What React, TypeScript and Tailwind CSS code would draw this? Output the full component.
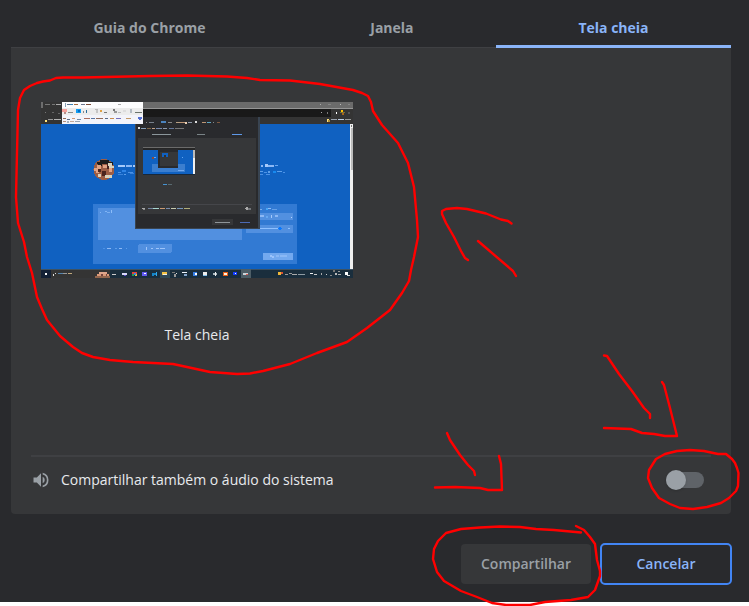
import { useState } from 'react';

type Block = [x: number, y: number, w: number, h: number, fill: string];

const blocks: Block[] = [
  [0, 0, 312, 176, '#1061c1'],
  // browser frame
  [0, 0, 312, 22, '#343434'],
  [0, 0, 2, 6, '#6d6d6d'],
  [102, 0, 210, 6, '#6b6b6b'],
  [102, 6, 210, 1, '#969696'],
  [102, 7, 188, 8, '#191919'],
  [4, 2, 5, 1, '#777'], [11, 2, 3, 1, '#777'], [15, 2, 5, 1, '#aaa'],
  [4, 10, 1, 1, '#777'], [11, 10, 2, 1, '#666'], [17, 11, 2, 1, '#666'],
  [4, 18, 2, 2, '#ffe27a'], [7, 17, 5, 1, '#999'], [13, 17, 7, 1, '#b5b5b5'],
  [279, 2, 1, 1, '#aaa'], [287, 2, 3, 1, '#858585'], [299, 2, 1, 1, '#bbb'], [307, 2, 2, 1, '#858585'],
  [280, 10, 1, 1, '#aaa'], [286, 10, 1, 2, '#777'], [295, 10, 1, 2, '#fff'],
  [300, 8, 2, 2, '#ffc400'], [299, 10, 5, 1, '#78713c'], [301, 11, 2, 2, '#a8651a'], [307, 10, 2, 2, '#555'],
  [286, 17, 2, 3, '#ffe27a'], [287, 18, 2, 2, '#b08e38'], [290, 17, 6, 1, '#9aa3af'], [297, 17, 6, 1, '#b9cce4'], [304, 17, 6, 1, '#999'],
  // scroll bar
  [309, 22, 3, 145, '#f0f0f0'], [310, 26, 2, 42, '#bcbcbc'], [310, 23, 1, 2, '#777'],
  // profile names
  [77, 63, 7, 2, '#a5c9fa'], [85, 63, 6, 2, '#8cb8f5'], [92, 63, 2, 2, '#a5c9fa'],
  [77, 70, 3, 1, '#4a91e6'], [81, 68, 4, 2, '#2d83e6'], [87, 70, 5, 1, '#4a91e6'], [77, 72, 5, 1, '#3983dc'], [83, 72, 2, 1, '#5b9eea'], [89, 71, 4, 1, '#3983dc'],
  [220, 63, 2, 2, '#8cb8f5'], [224, 62, 3, 3, '#a5c9fa'], [227, 63, 6, 2, '#8cb8f5'], [234, 63, 3, 1, '#6ca7f0'],
  [219, 69, 3, 1, '#5b9eea'], [223, 70, 3, 1, '#4a91e6'], [227, 69, 2, 2, '#5b9eea'], [232, 69, 3, 2, '#1789ef'], [236, 69, 5, 1, '#5b9eea'], [242, 70, 2, 1, '#4a91e6'],
  [219, 72, 3, 1, '#4a91e6'], [225, 72, 4, 1, '#4a91e6'],
  // form card
  [52, 102, 204, 60, '#327ad3'],
  [57, 106, 144, 32, '#5290e0'],
  [59, 110, 1, 1, '#80b3f4'], [64, 109, 2, 1, '#80b3f4'], [66, 110, 3, 1, '#7aaff0'], [70, 108, 1, 3, '#8cbcf8'],
  [62, 146, 2, 1, '#4a91e6'], [66, 146, 4, 1, '#8cb8f5'], [74, 146, 2, 1, '#5b9eea'], [78, 146, 3, 1, '#8cb8f5'], [85, 146, 1, 1, '#5b9eea'],
  [219, 107, 2, 1, '#7aaff0'], [225, 106, 2, 2, '#45a4f5'], [227, 106, 3, 1, '#8cbcf8'], [231, 107, 5, 1, '#659fe6'],
  [208, 111, 44, 7, '#5290e0'], [205, 123, 47, 8, '#5290e0'],
  [219, 113, 4, 2, '#8cb8f5'], [225, 114, 2, 2, '#65a7f0'], [230, 113, 1, 3, '#a5c9fa'], [234, 113, 3, 2, '#8cb8f5'], [250, 115, 1, 1, '#b5d5ff'],
  [209, 126, 31, 1, '#8ec0ff'], [237, 126, 4, 1, '#0878ff'], [238, 125, 2, 3, '#0878ff'], [247, 126, 2, 1, '#8ec0ff'],
  [222, 151, 30, 7, '#73a9ef'], [229, 153, 2, 2, '#9bc4fc'], [231, 154, 2, 2, '#9bc4fc'], [235, 153, 3, 2, '#8ab8f5'], [239, 153, 7, 2, '#8ab8f5'],
  // share dialog
  [94, 15, 125, 112, '#394451'],
  [95, 15, 122, 111, '#292a2d'],
  [97, 36, 118, 76, '#363739'],
  [105, 20, 1, 1, '#888'], [108, 20, 5, 1, '#78818c'], [120, 19, 5, 2, '#4b83bd'], [127, 20, 4, 1, '#888'],
  [135, 20, 4, 1, '#b8a083'], [139, 20, 5, 1, '#bd9675'], [144, 20, 2, 2, '#ead0b5'], [147, 20, 4, 1, '#9099aa'], [154, 19, 2, 2, '#ddd'], [161, 20, 4, 1, '#bd9675'], [166, 20, 4, 1, '#5ea7c4'], [172, 20, 1, 1, '#888'], [176, 20, 3, 1, '#7e5940'],
  [97, 25, 2, 2, '#ddd'], [100, 26, 5, 1, '#849db7'], [106, 26, 4, 1, '#806747'], [111, 26, 3, 1, '#c0a289'], [115, 26, 6, 1, '#7789ad'], [122, 26, 4, 1, '#909aa8'], [128, 26, 5, 1, '#64779b'], [134, 26, 9, 1, '#777'],
  [111, 32, 19, 1, '#8b969b'], [156, 32, 8, 1, '#798386'], [191, 32, 10, 1, '#5f99e8'],
  [102, 45, 52, 28, '#1061c1'], [102, 45, 52, 1, '#6b6b6b'], [102, 46, 52, 2, '#262626'],
  [111, 62, 33, 8, '#3b7ecf'], [117, 47, 20, 19, '#292a2d'], [119, 50, 18, 14, '#363739'], [121, 51, 6, 4, '#1061c1'], [123, 53, 2, 2, '#303030'],
  [111, 55, 2, 2, '#8d4a35'], [113, 55, 2, 1, '#65a7f0'], [141, 55, 1, 1, '#65a7f0'], [137, 68, 6, 1, '#73a9ef'],
  [152, 48, 2, 24, '#f0f0f0'], [152, 48, 2, 8, '#bcbcbc'], [102, 72, 52, 1, '#17283b'],
  [122, 82, 4, 1, '#4592d1'], [127, 82, 4, 1, '#596a70'], [101, 102, 110, 1, '#45464a'],
  [101, 106, 3, 1, '#aaa'], [102, 107, 2, 1, '#888'], [107, 106, 5, 1, '#73809d'], [112, 106, 6, 1, '#a9d7d0'], [119, 106, 5, 1, '#c99b74'], [125, 106, 4, 1, '#788daf'], [130, 106, 5, 1, '#c8cbb0'], [136, 106, 6, 1, '#7798bd'], [143, 106, 6, 1, '#b0ad79'],
  [204, 106, 4, 1, '#aaa'], [205, 105, 2, 3, '#aaa'], [207, 106, 3, 2, '#727579'],
  [171, 117, 21, 6, '#363739'], [174, 120, 15, 1, '#8f9599'], [199, 120, 10, 1, '#4c6ab5'],
  // task bar
  [0, 167, 312, 9, '#1a2e3d'], [0, 167, 312, 1, '#3d5262'], [0, 168, 10, 8, '#142136'], [10, 168, 59, 8, '#343434'],
  [4, 171, 2, 2, '#fff'], [12, 172, 1, 2, '#ddd'], [14, 171, 1, 1, '#ddd'], [17, 171, 5, 1, '#5685ad'], [22, 171, 4, 1, '#999'], [27, 171, 4, 1, '#c0a87d'],
  [71, 172, 4, 1, '#ccc'], [81, 171, 5, 2, '#d9d8fa'], [83, 173, 2, 1, '#5549c9'],
  [91, 170, 5, 2, '#e34535'], [91, 172, 2, 2, '#249b50'], [94, 172, 2, 2, '#eac538'], [93, 171, 2, 2, '#3883ec'],
  [101, 170, 5, 4, '#615af1'], [103, 171, 2, 1, '#fff'],
  [111, 171, 2, 3, '#1786c8'], [113, 171, 3, 2, '#1786c8'], [115, 170, 1, 4, '#31a9ed'],
  [119, 168, 10, 8, '#324956'], [121, 170, 5, 3, '#f6c344'], [122, 172, 4, 1, '#eee'],
  [131, 170, 3, 1, '#777'], [133, 172, 2, 3, '#999'], [135, 171, 1, 1, '#ddd'],
  [141, 170, 5, 1, '#edf3fa'], [143, 172, 3, 2, '#83a4cc'],
  [152, 170, 4, 4, '#367ee4'], [154, 171, 2, 2, '#fff'], [162, 170, 4, 3, '#eee'], [162, 173, 4, 1, '#7fc0ee'],
  [172, 171, 4, 2, '#aab8bf'], [174, 170, 1, 4, '#eee'], [182, 170, 5, 4, '#e65f18'], [183, 171, 3, 2, '#fff1df'],
  [192, 170, 4, 3, '#133eff'], [194, 171, 1, 1, '#fff'],
  [200, 167, 10, 9, '#4d5e67'], [202, 171, 5, 2, '#ccd4d9'], [205, 172, 2, 1, '#dd5b55'],
  [237, 170, 3, 3, '#efb83a'], [240, 170, 2, 2, '#db5331'], [244, 172, 3, 1, '#999'], [248, 171, 3, 1, '#999'], [251, 172, 5, 1, '#aaa'], [257, 172, 7, 1, '#8f9ba3'],
  [269, 171, 3, 1, '#eee'], [273, 172, 3, 1, '#ccc'], [280, 171, 1, 2, '#aaa'], [285, 172, 1, 1, '#ccc'],
  [289, 173, 2, 1, '#888'], [292, 168, 2, 2, '#777'], [294, 171, 2, 2, '#bbb'], [297, 169, 2, 1, '#999'], [297, 172, 3, 1, '#aaa'], [304, 170, 3, 3, '#fff'], [306, 173, 3, 1, '#ddd'],
  // drawing on the search bar
  [54, 174, 15, 2, '#93664e'], [56, 172, 12, 2, '#d99978'], [58, 170, 8, 2, '#dfa58c'], [60, 172, 2, 2, '#75433c'], [65, 172, 1, 2, '#75433c'],
  // floating toolbar
  [21, 0, 81, 22, '#fdfdfe'], [21, 6, 81, 7, '#ececec'], [21, 13, 81, 9, '#f3f4fa'],
  [24, 1, 1, 4, '#87a1b7'], [26, 2, 3, 1, '#58718c'], [29, 2, 3, 1, '#3e82b5'], [33, 2, 4, 1, '#a56b40'], [40, 2, 4, 1, '#6d768e'], [45, 2, 5, 1, '#7b4c36'], [77, 2, 3, 1, '#aaa'],
  [21, 7, 5, 3, '#f4a19b'], [23, 10, 2, 2, '#b98e89'], [27, 10, 5, 1, '#8a8a8a'],
  [35, 7, 5, 4, '#119cf2'], [37, 8, 2, 2, '#056bc1'], [42, 9, 1, 2, '#888'], [45, 8, 1, 3, '#2c6d98'],
  [54, 7, 3, 1, '#bbb'], [55, 8, 2, 3, '#c6c6c6'], [59, 8, 2, 2, '#e0a246'], [63, 10, 3, 1, '#777'],
  [72, 7, 2, 2, '#777'], [73, 9, 3, 2, '#999'], [77, 10, 3, 1, '#bbb'], [82, 8, 3, 2, '#ddd'], [89, 7, 2, 4, '#b3bbc3'], [94, 10, 7, 1, '#6b746c'],
  [22, 16, 3, 1, '#936a55'], [26, 17, 3, 1, '#586b88'], [31, 16, 3, 1, '#d29a75'], [36, 17, 4, 1, '#738ba6'], [43, 16, 6, 1, '#ac6f5e'], [50, 16, 4, 1, '#5975a2'], [55, 16, 7, 1, '#936a55'], [64, 16, 3, 1, '#586b88'], [69, 16, 4, 1, '#c98b4b'], [75, 16, 5, 1, '#756fbc'], [85, 16, 5, 1, '#c39966'], [97, 15, 4, 2, '#536ed2'], [98, 17, 2, 1, '#536ed2'],
  [22, 19, 3, 1, '#b58f7c'], [26, 19, 2, 2, '#a9b3c0'], [29, 19, 4, 1, '#c3a89b'], [34, 19, 5, 1, '#9ba5b1'],
];

function ScreenPreview() {
  return (
    <svg viewBox="0 0 312 176" className="block w-[312px]" shapeRendering="crispEdges" aria-hidden="true">
      {blocks.map(([x, y, w, h, fill], i) => (
        <rect key={i} x={x} y={y} width={w} height={h} fill={fill} />
      ))}
      <rect x="97" y="142" width="34" height="9" rx="2" fill="#5290e0" />
      <path d="M105 145h1v3h-1zM110 146h2v1h-2zM115 146h3v1h-3zM119 146h5v1h-5z" fill="#9cc4fa" />
      <circle cx="63" cy="67.500" r="10.500" fill="#9c5d45" />
      <path d="M56 60h3v-2h9v2h4v3h-5v-1h-6v2h-4z" fill="#1e1d1d" />
      <path d="M53 66h3v-3h4v4h-2v4h-3v-2h-2zM62 63h4v3h-4zM68 65h3v5h-3z" fill="#e2a384" />
      <path d="M57 67h3v3h-3zM61 69h4v5h-4zM66 62h2v5h-2z" fill="#4a241f" />
      <path d="M67 61h4v3h2v2h-5v-2h-1zM64 73h7v3h-7zM57 72h3v3h-3z" fill="#d9d2bd" />
    </svg>
  );
}

const strokes = [
  '37,83 43,81.500 50,80.500 56,78 63,77.500 83,77.500 150,76 187,75.500 227,76.500 247,78 260,80 290,80.500 320,84 353,90 362,93 368,96 371,102 373,111 382,125 390,134 398,143 408,163 414,187 417,220 418,237 414,257 411,270 409,281 402,293 390,310 367,328 347,342 317,353 290,364 263,371 250,373.500 237,374 210,372 187,367 173,364 133,362 110,360 93,357 82,353 73,347 60,336 47,320 42,309 37,297 32,273 27,257 24,242 18,223 16,197 17,153 18,110 20,98 24,90 30,86 37,83',
  '511.500,223.500 508,221 501,219.500 486,213.500 467,209 457,208 446,209 442,211 442,214 446,223 454,237 461,251 465,258 468,260',
  '478,241 513,271 516,276',
  '604,355.500 607,356 619,374 632,391 644,408 650,414 650,418',
  '662,382 664,385 670,408 677,436 665,436 654,434 642,433 631,429 604,428',
  '447,433 450,440 460,455 468,465 474,471 475,475',
  '499,456 501,464 502,490 488,490 480,488 455,487 435,487.500',
  '735,463 737,468 738.500,473 738,486 736,491 729,498 721,503 707,507 693,509 680,508 670,504 659,498 652,488 648,478 649,470 656,459 665,454 677,451 690,450 704,451 718,454 726,454 732,459 735,463',
  '581,532.500 554,530 536,529 520,527 500,526.500 480,527.500 461,529 446,533 438,541 434,549 433,559 437,572 444,581 461,591 477,597 492,603 506,605 530,605 545,602 571,600 588,597 595,590 600,576 600,571 597,560 595,544 590,537 584,530 576,526',
];

const tabs = ['Guia do Chrome', 'Janela', 'Tela cheia'];

export default function App() {
  const [active, setActive] = useState(2);
  const [audio, setAudio] = useState(false);

  return (
    <div className="relative min-h-screen overflow-hidden bg-white font-['Segoe_UI','Open_Sans',sans-serif] text-sm leading-5">
      <main className="bg-[#292a2d] pl-[11px] pr-[18px] pb-[17px]">
        <div role="tablist" className="flex h-12 border-b border-[#3f4043]">
          {tabs.map((tab, i) => (
            <button
              key={tab}
              type="button"
              role="tab"
              aria-selected={i === active}
              onClick={() => setActive(i)}
              className={`-mb-px flex-auto border-b-[3px] pt-[10px] font-bold ${
                i === active ? 'border-[#8ab4f8] text-[#8ab4f8]' : 'border-transparent text-[#9aa0a6]'
              }`}
            >
              {tab}
            </button>
          ))}
        </div>
        <section role="tabpanel" className="rounded-b bg-[#363739]">
          <div className="flex h-[407px] px-[30px] pt-[54px]">
            <button type="button" className="flex flex-col items-center gap-[47px] self-start text-[#e8eaed]">
              <ScreenPreview />
              <span>Tela cheia</span>
            </button>
          </div>
          <div className="mx-5 flex h-[59px] items-start gap-[10px] border-t-2 border-[#3f4043] pt-[13px] pr-[7px]">
            <svg viewBox="0 0 24 24" className="h-5 w-5 shrink-0" fill="#9aa0a6" aria-hidden="true">
              <path d="M3 9v6h4l5 5V4L7 9H3zm13.500 3A4.500 4.500 0 0 0 14 7.970v8.050A4.470 4.470 0 0 0 16.500 12zM14 3.230v2.060a7 7 0 0 1 0 13.420v2.060a9 9 0 0 0 0-17.540z" />
            </svg>
            <label htmlFor="audio" className="flex-1 text-[#e8eaed]">
              Compartilhar também o áudio do sistema
            </label>
            <input
              id="audio"
              type="checkbox"
              role="switch"
              checked={audio}
              onChange={(e) => setAudio(e.target.checked)}
              className="mt-0.5 flex h-4 w-[38px] appearance-none items-center rounded-full bg-[#5f6368] before:h-5 before:w-5 before:rounded-full before:bg-[#9aa0a6] before:shadow checked:justify-end checked:before:bg-[#8ab4f8]"
            />
          </div>
        </section>
        <div className="-mr-px mt-[29px] flex items-center justify-end gap-[9px]">
          <button type="button" disabled className="h-10 w-[130px] rounded bg-[#363739] font-semibold text-[#9aa0a6]">
            Compartilhar
          </button>
          <button type="button" className="h-[42px] w-[132px] rounded-[5px] border-2 border-[#4285f4] font-semibold text-[#8ab4f8]">
            Cancelar
          </button>
        </div>
      </main>
      <svg
        viewBox="0 0 749 606"
        className="pointer-events-none absolute top-0 left-0 h-[606px] w-[749px]"
        fill="none"
        stroke="#ff0000"
        strokeWidth="2.400"
        strokeLinecap="round"
        strokeLinejoin="round"
        aria-hidden="true"
      >
        {strokes.map((points) => (
          <polyline key={points} points={points} />
        ))}
      </svg>
    </div>
  );
}
